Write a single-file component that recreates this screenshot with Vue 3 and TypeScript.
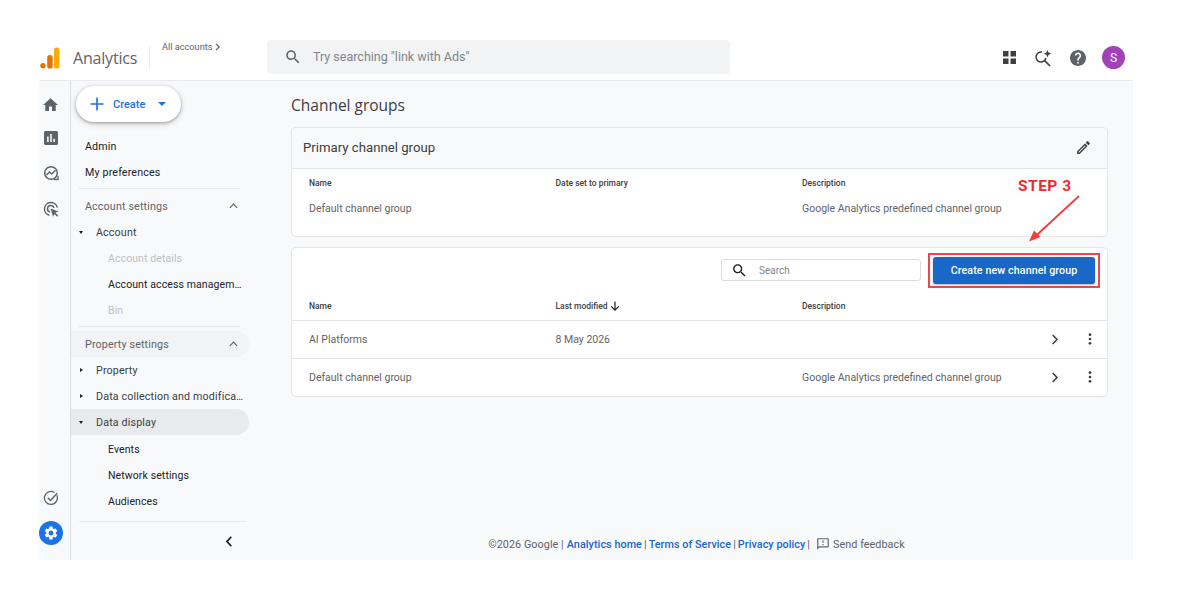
<script setup lang="ts">
interface NavItem {
  label: string
  kind: 'link' | 'section' | 'parent' | 'child' | 'divider'
  open?: boolean
  disabled?: boolean
  active?: boolean
  shaded?: boolean
}

const navItems: NavItem[] = [
  { label: 'Admin', kind: 'link' },
  { label: 'My preferences', kind: 'link' },
  { label: '', kind: 'divider' },
  { label: 'Account settings', kind: 'section' },
  { label: 'Account', kind: 'parent', open: true },
  { label: 'Account details', kind: 'child', disabled: true },
  { label: 'Account access managem…', kind: 'child' },
  { label: 'Bin', kind: 'child', disabled: true },
  { label: '', kind: 'divider' },
  { label: 'Property settings', kind: 'section', shaded: true },
  { label: 'Property', kind: 'parent' },
  { label: 'Data collection and modifica…', kind: 'parent' },
  { label: 'Data display', kind: 'parent', open: true, active: true },
  { label: 'Events', kind: 'child' },
  { label: 'Network settings', kind: 'child' },
  { label: 'Audiences', kind: 'child' }
]

const groups = [
  { name: 'AI Platforms', modified: '8 May 2026', description: '' },
  { name: 'Default channel group', modified: '', description: 'Google Analytics predefined channel group' }
]
</script>

<template>
  <div class="page">
    <div class="frame">
      <header class="topbar">
        <div class="brand">
          <svg class="logo" viewBox="0 0 20 22" width="20" height="22">
            <rect x="14" y="0.5" width="5.5" height="21" rx="2.6" fill="#f9ab00" />
            <rect x="7.2" y="8" width="5.5" height="13.5" rx="2.6" fill="#e37400" />
            <circle cx="3" cy="18.8" r="2.7" fill="#e37400" />
          </svg>
          <span class="brand-name">Analytics</span>
        </div>
        <div class="accounts">
          All accounts
          <svg viewBox="0 0 10 10" width="8" height="10"><path d="M2.5 1 L6.5 5 L2.5 9" fill="none" stroke="#5f6368" stroke-width="1.5" /></svg>
        </div>
        <div class="top-search">
          <svg viewBox="0 0 24 24" width="18" height="18"><path fill="#5f6368" d="M15.5 14h-.79l-.28-.27C15.41 12.59 16 11.11 16 9.5 16 5.91 13.09 3 9.5 3S3 5.91 3 9.5 5.91 16 9.5 16c1.61 0 3.09-.59 4.23-1.57l.27.28v.79l5 4.99L20.49 19l-4.99-5zm-6 0C7.01 14 5 11.99 5 9.5S7.01 5 9.5 5 14 7.01 14 9.5 11.99 14 9.5 14z" /></svg>
          <span>Try searching "link with Ads"</span>
        </div>
        <div class="top-actions">
          <svg viewBox="0 0 13 13" width="13" height="13"><g fill="#3c4043"><rect width="5.5" height="5.5" /><rect x="7.5" width="5.500" height="5.5" /><rect y="7.5" width="5.5" height="5.500" /><rect x="7.5" y="7.5" width="5.500" height="5.500" /></g></svg>
          <svg viewBox="0 0 18 18" width="18" height="18"><path d="M8 3.100 A5 5 0 1 0 11.900 9" fill="none" stroke="#3c4043" stroke-width="1.500" /><path d="M10.500 11.500 L16 17" stroke="#3c4043" stroke-width="1.700" /><path fill="#3c4043" d="M13.500 1 L14.600 3.600 L17.200 4.700 L14.600 5.800 L13.500 8.400 L12.400 5.800 L9.800 4.700 L12.400 3.600 Z" /></svg>
          <svg viewBox="2 2 20 20" width="16" height="16"><path fill="#5f6368" d="M12 2C6.48 2 2 6.48 2 12s4.48 10 10 10 10-4.48 10-10S17.52 2 12 2zm1 17h-2v-2h2v2zm2.07-7.75l-.9.92C13.45 12.9 13 13.5 13 15h-2v-.5c0-1.1.45-2.1 1.17-2.83l1.24-1.26c.37-.36.59-.86.59-1.41 0-1.1-.9-2-2-2s-2 .9-2 2H8c0-2.21 1.79-4 4-4s4 1.79 4 4c0 .88-.36 1.68-.93 2.25z" /></svg>
          <div class="avatar">S</div>
        </div>
      </header>

      <div class="body">
        <nav class="rail">
          <svg viewBox="2 3 20 17" width="15" height="13"><path fill="#5f6368" d="M10 20v-6h4v6h5v-8h3L12 3 2 12h3v8z" /></svg>
          <svg viewBox="3 3 18 18" width="14" height="14"><path fill="#5f6368" d="M19 3H5c-1.100 0-2 .9-2 2v14c0 1.100.9 2 2 2h14c1.100 0 2-.9 2-2V5c0-1.100-.9-2-2-2zM9 17H7v-7h2v7zm4 0h-2V7h2v10zm4 0h-2v-4h2v4z" /></svg>
          <svg viewBox="0 0 16 16" width="16" height="16"><circle cx="8" cy="8" r="6.300" fill="none" stroke="#5f6368" stroke-width="1.500" /><path d="M3.500 10 L6.500 7 L8.700 9 L12.500 5.200" fill="none" stroke="#5f6368" stroke-width="1.500" /><path d="M11 14.500 H15 V11" fill="none" stroke="#5f6368" stroke-width="1.300" /></svg>
          <svg viewBox="0 0 16 16" width="16" height="16"><path d="M14.300 6.500 A6.500 6.500 0 1 0 6.500 14.300" fill="none" stroke="#5f6368" stroke-width="1.400" /><path d="M11 7 A3.300 3.300 0 1 0 7 11" fill="none" stroke="#5f6368" stroke-width="1.400" /><path fill="#5f6368" d="M7.500 7.500 L15.500 10.500 L12.400 11.800 L15.300 14.700 L14.200 15.800 L11.300 12.900 L10 15.800 Z" /></svg>
          <div class="rail-space"></div>
          <svg viewBox="0 0 16 16" width="16" height="16"><path d="M13.800 5.200 A6.500 6.500 0 1 1 11.500 2.500" fill="none" stroke="#5f6368" stroke-width="1.300" /><path d="M4.800 7.800 L7.400 10.400 L14.300 3.300" fill="none" stroke="#5f6368" stroke-width="1.400" /></svg>
          <div class="gear">
            <svg viewBox="0 0 24 24" width="16" height="16"><path fill="#fff" d="M19.14 12.94c.04-.3.06-.61.06-.94 0-.32-.02-.64-.07-.94l2.03-1.58c.18-.14.23-.41.12-.61l-1.92-3.32c-.12-.22-.37-.29-.59-.22l-2.39.96c-.5-.38-1.03-.7-1.62-.94l-.36-2.54c-.04-.24-.24-.41-.48-.41h-3.84c-.24 0-.43.17-.47.41l-.36 2.54c-.59.24-1.13.57-1.62.94l-2.39-.96c-.22-.08-.47 0-.59.22L2.74 8.87c-.12.21-.08.47.12.61l2.03 1.58c-.05.3-.09.63-.09.94s.02.64.07.94l-2.03 1.58c-.18.14-.23.41-.12.61l1.92 3.32c.12.22.37.29.59.22l2.39-.96c.5.38 1.03.7 1.62.94l.36 2.54c.05.24.24.41.48.41h3.84c.24 0 .44-.17.47-.41l.36-2.54c.59-.24 1.13-.56 1.62-.94l2.39.96c.22.08.47 0 .59-.22l1.92-3.32c.12-.22.07-.47-.12-.61l-2.01-1.58zM12 15.6c-1.98 0-3.6-1.62-3.6-3.6s1.62-3.6 3.6-3.6 3.6 1.62 3.6 3.6-1.62 3.6-3.6 3.6z" /></svg>
          </div>
        </nav>

        <aside class="sidebar">
          <button class="create">
            <svg viewBox="0 0 14 14" width="14" height="14"><path d="M7 0.500 V13.500 M0.500 7 H13.500" stroke="#1a73e8" stroke-width="1.600" /></svg>
            <span>Create</span>
            <svg viewBox="0 0 8 4" width="8" height="4"><path d="M0 0 H8 L4 4 Z" fill="#1a73e8" /></svg>
          </button>
          <ul class="nav">
            <template v-for="(item, i) in navItems" :key="i">
              <li v-if="item.kind === 'divider'" class="divider"></li>
              <li
                v-else
                class="nav-row"
                :class="[item.kind, { disabled: item.disabled, active: item.active, shaded: item.shaded }]"
              >
                <span v-if="item.kind === 'parent'" class="caret" :class="{ open: item.open }"></span>
                <span class="nav-label">{{ item.label }}</span>
                <svg v-if="item.kind === 'section'" class="collapse" viewBox="0 0 10 6" width="9" height="6"><path d="M1 5 L5 1 L9 5" fill="none" stroke="#5f6368" stroke-width="1.300" /></svg>
              </li>
            </template>
          </ul>
          <div class="side-foot">
            <svg viewBox="0 0 8 12" width="8" height="11"><path d="M6.500 1 L1.800 6 L6.500 11" fill="none" stroke="#202124" stroke-width="1.900" /></svg>
          </div>
        </aside>

        <main class="content">
          <h1>Channel groups</h1>

          <section class="card">
            <div class="card-head">
              <span>Primary channel group</span>
              <svg viewBox="0 0 24 24" width="17" height="17"><path fill="#3c4043" d="M3 17.250V21h3.750L17.810 9.940l-3.750-3.750L3 17.250zM5.920 19H5v-.92l9.060-9.060.92.92L5.920 19zM20.710 5.630l-2.340-2.340c-.2-.2-.45-.29-.71-.29s-.51.1-.7.29l-1.830 1.830 3.750 3.750 1.830-1.830c.39-.39.39-1.020 0-1.410z" /></svg>
            </div>
            <div class="grid-row col-heads primary-heads">
              <span>Name</span><span>Date set to primary</span><span>Description</span>
            </div>
            <div class="grid-row primary-value">
              <span>Default channel group</span><span></span><span>Google Analytics predefined channel group</span>
            </div>
          </section>

          <section class="card second">
            <div class="toolbar">
              <div class="search">
                <svg viewBox="0 0 24 24" width="17" height="17"><path fill="#202124" d="M15.500 14h-.79l-.28-.27C15.410 12.590 16 11.110 16 9.500 16 5.910 13.090 3 9.500 3S3 5.910 3 9.500 5.910 16 9.500 16c1.610 0 3.090-.59 4.230-1.570l.27.28v.79l5 4.990L20.490 19l-4.990-5zm-6 0C7.010 14 5 11.990 5 9.500S7.010 5 9.500 5 14 7.010 14 9.500 11.990 14 9.500 14z" /></svg>
                <span>Search</span>
              </div>
              <div class="cta-box">
                <button class="cta">Create new channel group</button>
              </div>
            </div>
            <div class="grid-row col-heads list-heads">
              <span>Name</span>
              <span class="sorted">Last modified
                <svg viewBox="0 0 10 10" width="10" height="10"><path d="M5 0.500 V9 M1.200 5.300 L5 9.100 L8.800 5.300" fill="none" stroke="#202124" stroke-width="1.200" /></svg>
              </span>
              <span>Description</span>
            </div>
            <div v-for="group in groups" :key="group.name" class="grid-row list-row">
              <span>{{ group.name }}</span>
              <span>{{ group.modified }}</span>
              <span>{{ group.description }}</span>
              <div class="row-actions">
                <svg viewBox="0 0 8 12" width="8" height="11"><path d="M1.500 1 L6.200 6 L1.500 11" fill="none" stroke="#3c4043" stroke-width="1.700" /></svg>
                <svg viewBox="0 0 4 14" width="4" height="12"><g fill="#3c4043"><circle cx="2" cy="2" r="1.600" /><circle cx="2" cy="7" r="1.600" /><circle cx="2" cy="12" r="1.600" /></g></svg>
              </div>
            </div>
          </section>

          <footer class="foot">
            <span class="copy">©2026 Google |</span>
            <a>Analytics home</a><span>|</span>
            <a>Terms of Service</a><span>|</span>
            <a>Privacy policy</a><span>|</span>
            <svg viewBox="0 0 24 24" width="14" height="14"><path fill="#5f6368" d="M20 2H4c-1.100 0-2 .9-2 2v18l4-4h14c1.100 0 2-.9 2-2V4c0-1.100-.9-2-2-2zm0 14H5.170L4 17.170V4h16v12zM11 12h2v2h-2zm0-6h2v4h-2z" /></svg>
            <span>Send feedback</span>
          </footer>
        </main>
      </div>

      <div class="step">STEP 3</div>
      <svg class="step-arrow" viewBox="0 0 56 50" width="56" height="50">
        <path d="M52 2 L6 44.500" stroke="#f23c3c" stroke-width="1.800" fill="none" />
        <path d="M2 47.500 L7 36.500 L13.500 43 Z" fill="#f23c3c" />
      </svg>
    </div>
  </div>
</template>

<style>
html,
body {
  margin: 0;
  background: #fff;
}
</style>

<style scoped>
.page {
  width: 1200px;
  height: 600px;
  padding: 35px 67px 40px 39px;
  box-sizing: border-box;
  font-family: Roboto, 'Liberation Sans', sans-serif;
  color: #3c4043;
  overflow: hidden;
}

.frame {
  position: relative;
  display: flex;
  flex-direction: column;
  height: 100%;
  background: #f8f9fa;
}

.topbar {
  display: flex;
  align-items: center;
  height: 45px;
  flex: none;
  background: #fff;
  border-bottom: 1px solid #e8eaed;
  position: relative;
}

.brand {
  display: flex;
  align-items: center;
  width: 111px;
  height: 24px;
  border-right: 1px solid #eceef0;
  margin-right: 11px;
  flex: none;
  box-sizing: border-box;
}

.logo {
  margin-left: 1px;
  margin-right: 13px;
}

.brand-name {
  font-family: 'Open Sans', Roboto, sans-serif;
  font-size: 16px;
  letter-spacing: -0.2px;
  color: #5f6368;
}

.accounts {
  display: flex;
  align-items: center;
  gap: 2px;
  width: 106px;
  padding-left: 1px;
  box-sizing: border-box;
  flex: none;
  font-size: 9.200px;
  color: #5f6368;
  align-self: flex-start;
  margin-top: 6px;
}

.top-search {
  display: flex;
  align-items: center;
  gap: 11px;
  width: 463px;
  height: 34px;
  margin-top: -2px;
  padding-left: 17px;
  box-sizing: border-box;
  background: #f1f3f4;
  border-radius: 4px;
  font-size: 12.500px;
  color: #80868b;
}

.top-actions {
  display: flex;
  align-items: center;
  gap: 18px;
  margin-left: auto;
  margin-right: 8px;
}

.avatar {
  width: 23px;
  height: 23px;
  margin-left: -2px;
  border-radius: 50%;
  background: #a142b8;
  color: #fff;
  font-size: 12px;
  display: flex;
  align-items: center;
  justify-content: center;
}

.body {
  display: flex;
  flex: 1;
  min-height: 0;
}

.rail {
  display: flex;
  flex-direction: column;
  align-items: center;
  width: 32px;
  flex: none;
  gap: 20px;
  padding: 17px 8px 15px 0;
  box-sizing: border-box;
  border-right: 1px solid #dadce0;
}

.rail-space {
  flex: 1;
}

.gear {
  width: 24px;
  height: 24px;
  flex: none;
  margin-top: -5px;
  border-radius: 50%;
  background: #1a73e8;
  display: flex;
  align-items: center;
  justify-content: center;
}

.sidebar {
  display: flex;
  flex-direction: column;
  width: 178px;
  flex: none;
  position: relative;
}

.create {
  display: flex;
  align-items: center;
  width: 105px;
  height: 36px;
  margin: 5px 0 11px 5px;
  padding: 0 0 0 14px;
  border: none;
  border-radius: 18px;
  background: #fff;
  box-shadow: 0 1px 3px rgba(60, 64, 67, 0.4), 0 2px 6px rgba(60, 64, 67, 0.2);
  color: #1a73e8;
  font-family: inherit;
  font-size: 11px;
  font-weight: 500;
}

.create span {
  margin: 0 13px 0 9px;
}

.nav {
  list-style: none;
  margin: 0;
  padding: 0;
}

.nav-row {
  display: flex;
  align-items: center;
  height: 26px;
  padding-left: 14px;
  font-size: 10.700px;
  letter-spacing: 0.15px;
  color: #202124;
  border-radius: 0 13px 13px 0;
  position: relative;
  white-space: nowrap;
}

.section {
  color: #5f6368;
  padding-right: 11px;
  justify-content: space-between;
}

.shaded {
  background: #f1f3f4;
}

.parent {
  padding-left: 25px;
  color: #3c4043;
}

.child {
  padding-left: 37px;
  font-size: 10.500px;
  letter-spacing: 0.1px;
}

.active {
  background: #e8eaed;
  margin-bottom: 1px;
}

.disabled {
  color: #bdc1c6;
}

.caret {
  position: absolute;
  left: 9px;
  top: 11px;
  width: 0;
  height: 0;
  border-style: solid;
  border-width: 2.500px 0 2.500px 3px;
  border-color: transparent transparent transparent #202124;
}

.caret.open {
  left: 8px;
  top: 12px;
  border-width: 3px 2.500px 0 2.500px;
  border-color: #202124 transparent transparent transparent;
}

.divider {
  height: 1px;
  margin: 3px 0 4px 8px;
  width: 161px;
  background: #e3e5e8;
}

.side-foot {
  position: absolute;
  left: 8px;
  right: 3px;
  bottom: 0;
  height: 38px;
  border-top: 1px solid #e8eaed;
  display: flex;
  align-items: center;
  justify-content: flex-end;
  padding-right: 13px;
}

.content {
  flex: 1;
  display: flex;
  flex-direction: column;
  padding: 0 25px 0 42px;
  min-width: 0;
}

h1 {
  margin: 14px 0 12px;
  font-family: 'Open Sans', Roboto, sans-serif;
  font-size: 15.500px;
  line-height: 20px;
  font-weight: 400;
  color: #3c4043;
}

.card {
  background: #fff;
  border: 1px solid #e3e5e8;
  border-radius: 5px;
  box-sizing: border-box;
}

.second {
  margin-top: 10px;
}

.card-head {
  display: flex;
  align-items: center;
  justify-content: space-between;
  height: 41px;
  padding: 0 15px 1px 11px;
  box-sizing: border-box;
  background: #f8f9fa;
  border-bottom: 1px solid #e3e5e8;
  border-radius: 5px 5px 0 0;
  font-size: 13.200px;
  color: #3c4043;
}

.grid-row {
  display: grid;
  grid-template-columns: 246.500px 246.500px 1fr;
  padding-left: 17px;
  align-items: center;
  font-size: 10.500px;
  color: #5f6368;
}

.col-heads {
  font-size: 8.500px;
  font-weight: 500;
  color: #3c4043;
}

.primary-heads {
  height: 28px;
}

.primary-value {
  height: 39px;
  box-sizing: border-box;
  padding-bottom: 17px;
}

.toolbar {
  display: flex;
  justify-content: flex-end;
  align-items: center;
  height: 44px;
  padding-right: 7px;
}

.search {
  display: flex;
  align-items: center;
  gap: 11px;
  width: 200px;
  height: 22px;
  margin-right: 7px;
  padding-left: 9px;
  box-sizing: border-box;
  border: 1px solid #dadce0;
  border-radius: 3px;
  font-size: 10px;
  color: #80868b;
}

.cta-box {
  padding: 2px 3px;
  border: 2px solid #f04448;
}

.cta {
  display: block;
  width: 162px;
  height: 27px;
  padding: 0;
  border: none;
  border-radius: 3px;
  background: #1967c6;
  color: #fff;
  font-family: inherit;
  font-size: 10.700px;
  letter-spacing: 0.1px;
  font-weight: 500;
  box-shadow: 0 1px 2px rgba(60, 64, 67, 0.4);
}

.list-heads {
  height: 29px;
  box-sizing: border-box;
  border-bottom: 1px solid #e3e5e8;
}

.sorted {
  display: flex;
  align-items: center;
  gap: 3px;
}

.list-row {
  position: relative;
  height: 38px;
  box-sizing: border-box;
  border-bottom: 1px solid #e3e5e8;
}

.list-row:last-child {
  height: 37px;
  border-bottom: none;
}

.row-actions {
  position: absolute;
  right: 15px;
  top: 12px;
  display: flex;
  align-items: center;
  gap: 29px;
}

.foot {
  margin-top: auto;
  height: 32px;
  display: flex;
  align-items: center;
  justify-content: center;
  gap: 2px;
  padding-right: 6px;
  font-size: 10.800px;
  letter-spacing: 0.05px;
  color: #5f6368;
}

.foot .copy {
  margin-right: 1px;
}

.foot a {
  color: #1a66c9;
  font-weight: 500;
}

.foot svg {
  margin: 0 1px 0 4px;
}

.step {
  position: absolute;
  left: 979px;
  top: 142px;
  font-size: 15.500px;
  font-weight: 700;
  color: #ee2b2e;
  letter-spacing: 0.5px;
}

.step-arrow {
  position: absolute;
  left: 988px;
  top: 159px;
}
</style>
